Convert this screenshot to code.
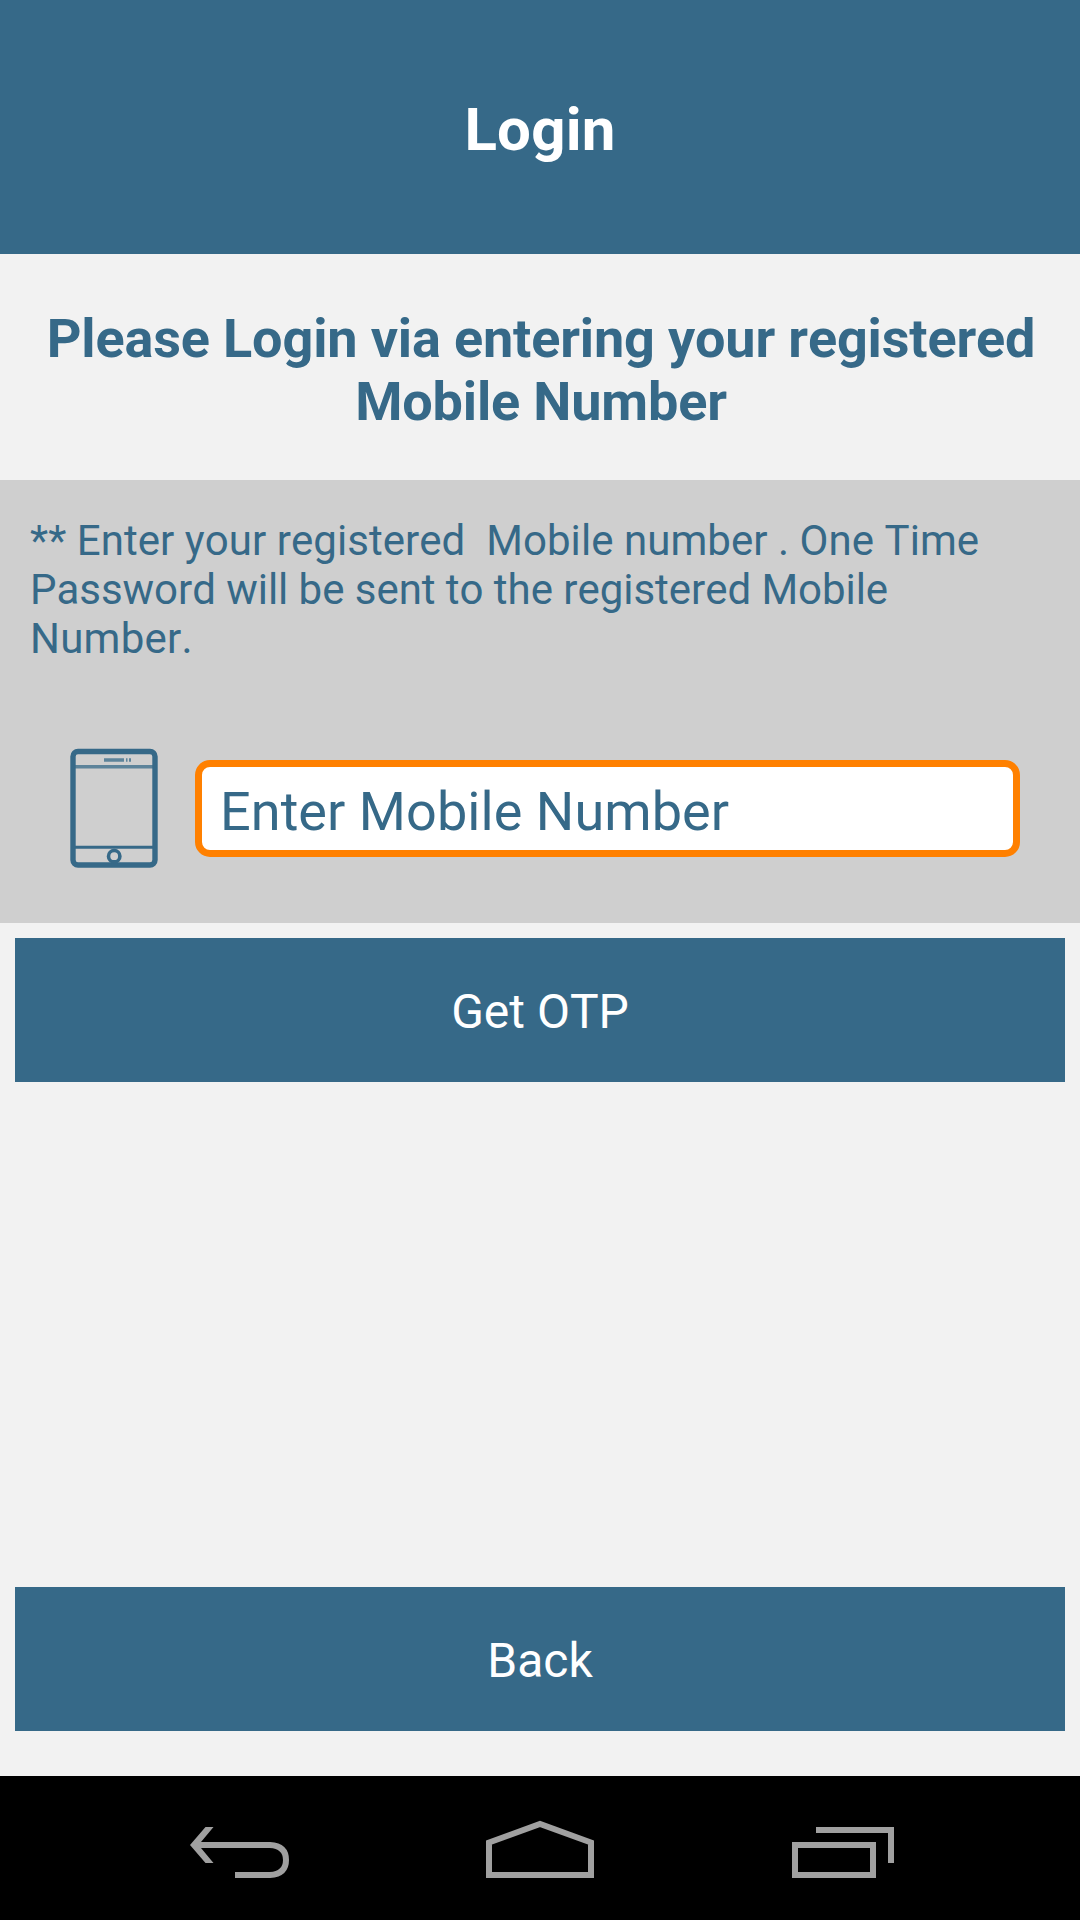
<template>
  <main class="screen">
    <header>Login</header>
    <h1>Please Login via entering your registered<br>Mobile Number</h1>
    <section class="panel">
      <p><span class="first">** Enter your registered&nbsp; Mobile number . One Time</span><br><span class="second">Password will be sent to the registered Mobile</span><br><span class="third">Number.</span></p>
      <div class="entry">
        <svg class="phone" width="88" height="120" viewBox="0 0 88 120" fill="none" stroke="#366988">
          <rect x="3" y="3.5" width="82" height="113.5" rx="5" stroke-width="5.4"/>
          <path d="M5 18.8H83" stroke-width="3.6" opacity=".75"/>
          <path d="M5 99.3H83" stroke-width="3"/>
          <path d="M34 12H54M56 12H57.5M59 12H61" stroke-width="3.6" opacity=".75"/>
          <circle cx="44.2" cy="108.2" r="5.7" stroke-width="3.6"/>
        </svg>
        <div class="field">Enter Mobile Number</div>
      </div>
    </section>
    <div class="button">Get OTP</div>
    <div class="spacer"></div>
    <div class="button back">Back</div>
    <nav>
      <svg width="1080" height="144" viewBox="0 0 1080 144" fill="none" stroke="#a0a0a0" stroke-width="6">
        <path d="M198 69H270Q286 70 286 84Q286 98 270 99H235"/>
        <path d="M190 69L205.5 51H213.5L201 66V72L213.5 87H205.5Z" fill="#a0a0a0" stroke="none"/>
        <path d="M489 99V66.5L540 48L591 66.5V99Z"/>
        <path d="M795 69H873V99H795ZM816 54H891V87"/>
      </svg>
    </nav>
  </main>
</template>
<style>body { margin: 0; }</style>
<style scoped>
.screen { width: 1080px; height: 1920px; display: flex; flex-direction: column; background: #f2f2f2; color: #366988; font-family: Roboto, sans-serif; font-kerning: none; }
header { height: 254px; line-height: 259px; background: #366988; color: #fff; text-align: center; font-size: 60px; font-weight: 700; letter-spacing: .2px; }
h1 { margin: 0; height: 226px; padding: 53px 0 0 2px; box-sizing: border-box; text-align: center; font-size: 54px; line-height: 63px; font-weight: 700; letter-spacing: -.16px; white-space: nowrap; }
.panel { height: 443px; background: #cfcfcf; box-sizing: border-box; padding: 36px 30px 0; }
p { margin: 0; font-size: 42px; line-height: 49px; white-space: nowrap; }
.first { letter-spacing: .05px; }
.second { letter-spacing: -.04px; }
.third { letter-spacing: .25px; }
.entry { display: flex; margin: 85px 0 0 40px; }
.field { margin: 12px 0 0 37px; width: 825px; height: 97px; box-sizing: border-box; border: 7px solid #ff8000; border-radius: 15px; background: #fff; padding-left: 18px; font-size: 54px; line-height: 89px; letter-spacing: .06px; }
.button { margin: 15px 15px 0; height: 144px; line-height: 148px; background: #366988; color: #fff; text-align: center; font-size: 48px; }
.spacer { flex: 1; }
.back { margin: 0 15px 45px; }
nav { height: 144px; background: #000; }
nav svg { display: block; }
</style>
